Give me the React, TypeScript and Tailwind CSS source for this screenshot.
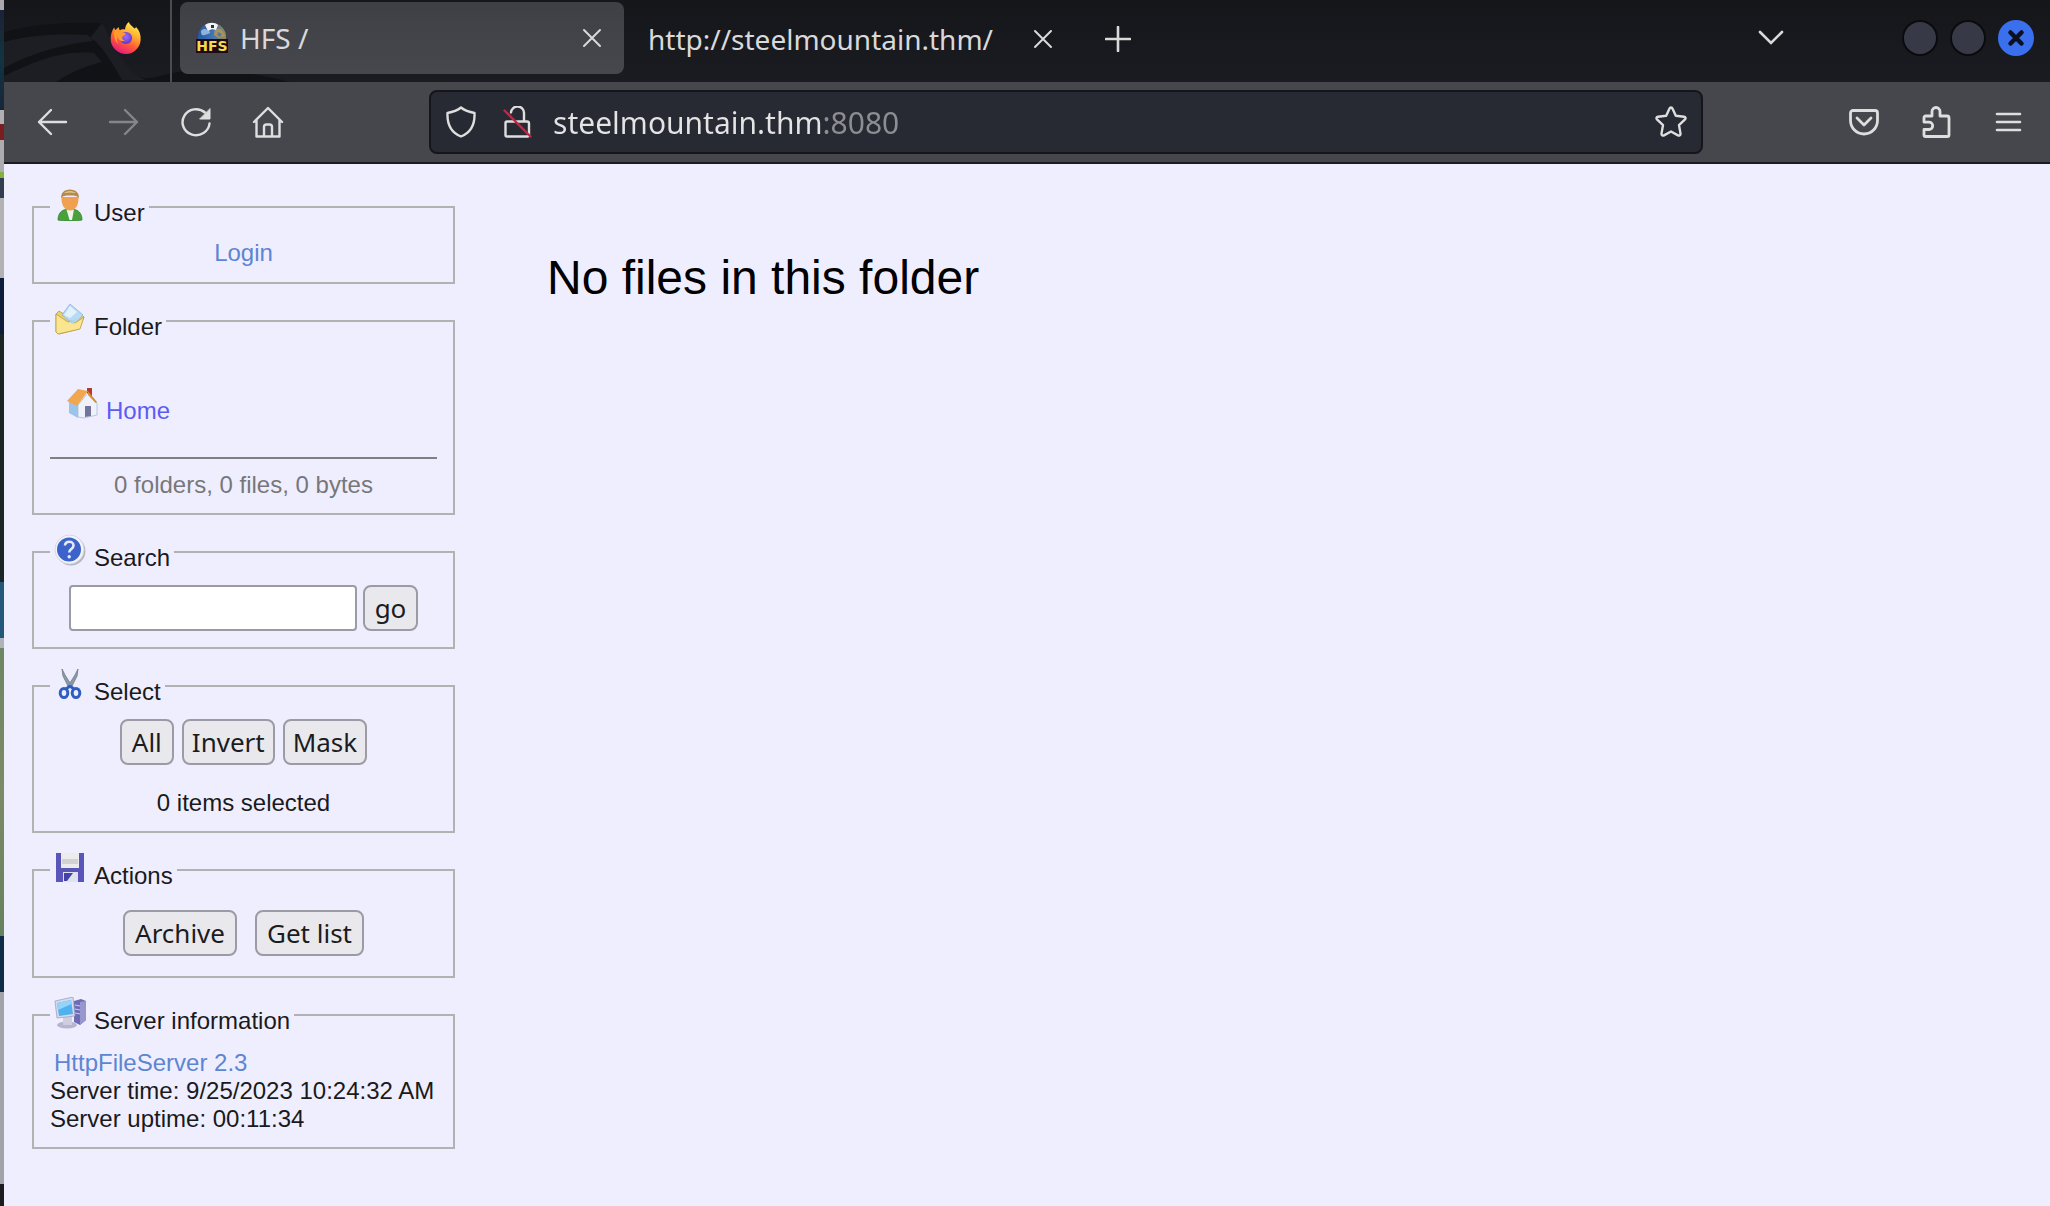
import React from "react";

type IconProps = { className?: string };

const sans = "font-['Noto_Sans',sans-serif]";

function FirefoxLogo() {
  return (
    <svg viewBox="0 0 34 34" className="size-8" aria-hidden="true">
      <defs>
        <linearGradient id="ffBody" x1="0.8" y1="0" x2="0.3" y2="1">
          <stop offset="0" stopColor="#fff35a" />
          <stop offset="0.35" stopColor="#ffb02e" />
          <stop offset="0.65" stopColor="#ff5a36" />
          <stop offset="1" stopColor="#e31587" />
        </linearGradient>
        <radialGradient id="ffGlobe" cx="0.5" cy="0.4" r="0.6">
          <stop offset="0" stopColor="#a06bff" />
          <stop offset="1" stopColor="#5a35c8" />
        </radialGradient>
      </defs>
      <path d="M20 0c1 3 4 4.500 6 7 1-.3 1.500-1 1.500-2 4 4 5.500 9 5 14.500C31.800 28 25 34 17 34S1.500 28 .8 19.500C.3 13.500 2 9.500 4.500 5.500c.3 1.500.6 2.200 1.200 3C7 7 8 6.200 9.500 5.500c0 1.500.3 2.500 1 3.300C12 7.500 14 7.500 16 8c0-3 1.500-6 4-8z" fill="url(#ffBody)" />
      <circle cx="17" cy="17" r="6.500" fill="url(#ffGlobe)" />
      <path d="M5 9c4-1 7 0 8.500 2.500 1.500.2 3 .3 3.200 1.200 0 1-3.200 1.800-3.700 3.300-.3 2 .8 3.500 3 4-3.500 1.500-7-.5-7.500-4C7 18 7 21 9 23.500 5 21 3.500 14 5 9z" fill="#ff9a2e" />
    </svg>
  );
}

function HfsFavicon() {
  return (
    <svg viewBox="0 0 32 32" className="size-8" aria-hidden="true">
      <defs>
        <linearGradient id="hfsGlobe" x1="0" y1="0.5" x2="1" y2="0.5">
          <stop offset="0" stopColor="#2458a8" />
          <stop offset="0.5" stopColor="#3f74b5" />
          <stop offset="1" stopColor="#9b8b56" />
        </linearGradient>
      </defs>
      <circle cx="16" cy="15" r="14" fill="url(#hfsGlobe)" />
      <path d="M5 9c3-3 5-2 8 0s-1 3-4 4-4 0-4-4z" fill="#8fb2da" />
      <path d="M19 8c4-3 8 0 10 6l-6 2-5-3z" fill="#a8945f" />
      <path d="M22 10l4 2-2 3-3-2z" fill="#5c7a9c" />
      <path d="M9 3c4-3 10-3 13 0l-2 5-4-1-4 2z" fill="#f1f3f6" />
      <path d="M15 3h3v3h-3z" fill="#24324a" />
      <rect x="0" y="17" width="32" height="14" fill="#1d0a12" />
      <text x="16" y="29" textAnchor="middle" fontFamily="DejaVu Sans, sans-serif" fontWeight="700" fontSize="14" fill="#f0dc4c">HFS</text>
    </svg>
  );
}

function CloseIcon({ className = "size-5" }: IconProps) {
  return (
    <svg viewBox="0 0 20 20" className={className} fill="none" stroke="currentColor" strokeWidth="2" strokeLinecap="round" aria-hidden="true">
      <path d="M2 2l16 16M18 2L2 18" />
    </svg>
  );
}

const line = {
  viewBox: "0 0 32 32",
  className: "size-8",
  fill: "none",
  stroke: "currentColor",
  strokeWidth: 2.4,
  strokeLinecap: "round" as const,
  strokeLinejoin: "round" as const,
  "aria-hidden": true,
};

const BackIcon = () => (
  <svg {...line}><path d="M30 16H3M15 4L3 16l12 12" /></svg>
);
const ForwardIcon = () => (
  <svg {...line}><path d="M2 16h27M17 4l12 12-12 12" /></svg>
);
const ReloadIcon = () => (
  <svg {...line}>
    <path d="M29.500 17.500A13.500 13 0 1 1 25 6.500" />
    <path d="M30 3v10H20z" fill="currentColor" strokeWidth="1" />
  </svg>
);
const HomeIcon = () => (
  <svg {...line}>
    <path d="M2 16L16 2l14 14M4.500 14V30.500h23V14M12 30V21a2.500 2.500 0 0 1 2.500-2.500h3A2.500 2.500 0 0 1 20 21v9" />
  </svg>
);
const ShieldIcon = () => (
  <svg {...line}>
    <path d="M16 1.500c4 3.200 8.500 4.600 13.500 5.500C30 19 25 27 16 30.500 7 27 2 19 2.500 7 7.500 6.100 12 4.700 16 1.500z" />
  </svg>
);
const LockIcon = () => (
  <svg {...line}>
    <path d="M10 6.500A6.500 6.500 0 0 1 23 7.500V15M6 15.500h20a2 2 0 0 1 2 2V29a1.500 1.500 0 0 1-1.500 1.500H6A1.500 1.500 0 0 1 4.500 29V17A1.500 1.500 0 0 1 6 15.500z" />
    <path d="M3.500 4.500L29.500 30.500" stroke="#cf2142" />
  </svg>
);
const StarIcon = () => (
  <svg {...line}>
    <path d="M16 1.500c.8 0 1.300.5 1.600 1.200l3.200 7 8.200 1c1.500.2 2 1.700 1 2.700l-6 5.700 1.500 8.500c.2 1.500-1.200 2.500-2.500 1.800L16 25.500l-7 3.900c-1.300.7-2.700-.3-2.500-1.800L8 19.100l-6-5.700c-1-1-.5-2.500 1-2.700l8.200-1 3.200-7c.3-.7.8-1.200 1.600-1.200z" />
  </svg>
);
const PocketIcon = () => (
  <svg {...line} strokeWidth={2.800}>
    <path d="M5 4.500h22a2.500 2.500 0 0 1 2.500 2.500v7.500a13.500 13.500 0 0 1-27 0V7A2.500 2.500 0 0 1 5 4.500zM9 12l7 7 7-7" />
  </svg>
);
const PuzzleIcon = () => (
  <svg {...line} strokeWidth={2.800}>
    <path d="M12 10V5.500a4 4 0 0 1 8 0V10H27a2 2 0 0 1 2 2v17a1.500 1.500 0 0 1-1.500 1.500h-22A1.500 1.500 0 0 1 4 29v-5.500h5a3.700 3.700 0 0 0 0-7.400H4V11.500A1.500 1.500 0 0 1 5.500 10z" />
  </svg>
);
const MenuIcon = () => (
  <svg {...line} strokeWidth={2.600}><path d="M5 8h23M5 16h23M5 24h23" /></svg>
);

const UserIcon = () => (
  <svg viewBox="0 0 32 32" className="size-8" aria-hidden="true">
    <path d="M4 31c0-7 4-10 8-10.500h8c4 .5 8 3.500 8 10.500-6 1.500-18 1.500-24 0z" fill="#4aa13c" stroke="#2f8030" strokeWidth="0.800" />
    <path d="M12.500 20.500h7.500L18 31h-2.500z" fill="#eef5ee" />
    <path d="M7.500 8C7 15 10 21.500 16 21.500S25 15 24.500 8z" fill="#f0a050" />
    <path d="M7 9c0-5 3-8.500 9-8.500S25 4 25 9c-2-2-4-2.500-9-2.500S9 7 7 9z" fill="#b58a4a" />
    <path d="M10 4c3-2.500 9-2.500 12 0-4-.8-8-.8-12 0z" fill="#e8cf9c" />
  </svg>
);
const FolderIcon = () => (
  <svg viewBox="0 0 32 32" className="size-8" aria-hidden="true">
    <path d="M2 11l3-3 5 3 14-2 6 5-5 12-20 5-3-2z" fill="#eed06a" stroke="#b89a45" strokeWidth="0.800" />
    <path d="M16 1l13 11-9 10L8 12z" fill="#b9daf5" stroke="#87b3dd" strokeWidth="0.800" />
    <path d="M16 3l7 6-7 6-6-3z" fill="#e3f1fc" />
    <path d="M2 11l12 8 3-1 4 2 9-6-4 12L4 31 2 29z" fill="#fbe58e" stroke="#b89a45" strokeWidth="0.800" />
    <path d="M15 19l8-4-4 6z" fill="#a9d3f3" />
  </svg>
);
const HouseIcon = () => (
  <svg viewBox="0 0 32 32" className="size-8" aria-hidden="true">
    <path d="M21 1h5v9h-5z" fill="#b3392e" />
    <path d="M3 13l9 3v15L3 26z" fill="#9cc4ea" />
    <path d="M12 18l10-12 9 10v12l-13 3-6-1z" fill="#eef3fa" stroke="#a9bdd6" strokeWidth="0.800" />
    <path d="M1 14L12 2l10 2-11 15z" fill="#f1a750" />
    <path d="M22 4l9 11-1.500 1L22 8z" fill="#d98a3c" />
    <path d="M19 19h6v10l-6 1z" fill="#72749c" />
  </svg>
);
const QuestionIcon = () => (
  <svg viewBox="0 0 32 32" className="size-8" aria-hidden="true">
    <circle cx="17" cy="17" r="14.500" fill="#b5b6c4" />
    <circle cx="15.500" cy="15.500" r="14.500" fill="#f3f3fa" stroke="#cfd0dc" strokeWidth="0.800" />
    <circle cx="15" cy="15.500" r="12" fill="#3c63c9" />
    <path d="M11 11.500c.3-5 8.500-5 8.500 0 0 3.500-4.300 3.500-4.300 7" fill="none" stroke="#e4ebfb" strokeWidth="2.600" />
    <circle cx="15.200" cy="22.700" r="1.700" fill="#e4ebfb" />
  </svg>
);
const ScissorsIcon = () => (
  <svg viewBox="0 0 32 32" className="size-8" fill="none" aria-hidden="true">
    <path d="M8 1l1 7 5 10 4 0L11 7zM24 1l-1 7-5 10-4 0L21 7z" fill="#8c98a6" stroke="#7b8896" strokeWidth="1" />
    <ellipse cx="10" cy="25" rx="3.800" ry="4.500" stroke="#2e5fc0" strokeWidth="3" />
    <ellipse cx="22" cy="25" rx="3.800" ry="4.500" stroke="#2e5fc0" strokeWidth="3" />
    <path d="M12 21l4-3 4 3" stroke="#2e5fc0" strokeWidth="3" />
  </svg>
);
const DiskIcon = () => (
  <svg viewBox="0 0 32 32" className="size-8" aria-hidden="true">
    <path d="M2 1h28v29H2z" fill="#5a55b8" />
    <path d="M7 1h18v15H7z" fill="#ececec" />
    <path d="M8 7h16v5H8z" fill="#d2d2d2" />
    <path d="M9 20h15v10H9z" fill="#dfe3ee" />
    <path d="M10 21h9l-6 8h-3z" fill="#4542a5" />
  </svg>
);
const ServerIcon = () => (
  <svg viewBox="0 0 32 32" className="size-8" aria-hidden="true">
    <path d="M20 4l7-2 5 2v19l-6 5-6-3z" fill="#6d6bb5" />
    <path d="M26 5l6-1v19l-6 5z" fill="#9796cf" />
    <path d="M21 8l5 1M21 12l5 1M21 16l5 1" stroke="#c9c9ea" strokeWidth="1.200" />
    <ellipse cx="13" cy="28" rx="10" ry="3.500" fill="#b7b4cf" />
    <path d="M9 19h9v9H9z" fill="#cfcde0" />
    <path d="M1 4l18-4 2 19-18 2z" fill="#d8d9ea" stroke="#9fa1c0" strokeWidth="0.800" />
    <path d="M3 6l14-3 2 14-14 2z" fill="#4fb2f0" />
    <path d="M3 6l14-3 .5 4L4 13z" fill="#93d4fa" />
  </svg>
);

function Panel({ title, icon, className, children }: { title: string; icon: React.ReactNode; className: string; children: React.ReactNode }) {
  return (
    <fieldset className={`min-w-0 border-2 border-[#b2b2b2] px-4 ${className}`}>
      <legend className="flex h-10 items-end gap-2 px-1 text-left">
        <span className="mt-0.5 self-start">{icon}</span>
        <span>{title}</span>
      </legend>
      {children}
    </fieldset>
  );
}

function FormButton({ children, className = "px-2.5" }: { children: string; className?: string }) {
  return (
    <button type="button" className={`h-[46px] rounded-lg border-2 border-[#9b9aa5] bg-[#e9e9ed] text-[26px] leading-[42px] text-[#1c1c1e] ${sans} ${className}`}>
      {children}
    </button>
  );
}

function TitleBar() {
  return (
    <header className={`relative flex h-[82px] items-stretch overflow-hidden bg-linear-to-b from-[#15161a] to-[#1b1c21] text-[28px] text-[#d9d9da] ${sans}`}>
      <svg className="absolute left-0 top-0 h-[82px] w-[300px]" viewBox="0 0 300 82" aria-hidden="true">
        <path d="M0 32C30 24 60 22 98 23c6 16 14 32 28 48 8 9 18 8 30 5 20-6 60-12 130 6H0z" fill="#111216" />
        <path d="M0 42c30-8 60-8 84-7l5 6C60 44 30 52 0 68z" fill="#1d1e23" />
        <path d="M0 76c30-14 56-26 90-23l8 9C80 66 64 74 52 82H0z" fill="#1d1e23" />
        <path d="M98 23c14 26 26 52 44 57h-24C108 62 96 42 86 38z" fill="#1d1e23" />
      </svg>
      <div className="relative flex w-[168px] items-center justify-end border-r-2 border-[#4b4c50] pb-1.5 pr-7">
        <FirefoxLogo />
      </div>
      <div className="relative mt-0.5 ml-2 mb-2 flex w-[444px] items-center gap-3 rounded-lg bg-linear-to-b from-[#3f4045] to-[#47484d] pl-4 pr-[18px]">
        <HfsFavicon />
        <span className="flex-1">HFS /</span>
        <button type="button" aria-label="Close tab HFS" className="p-1"><CloseIcon /></button>
      </div>
      <div className="relative flex items-center gap-10 pb-1 pl-6">
        <span>http://steelmountain.thm/</span>
        <button type="button" aria-label="Close tab steelmountain"><CloseIcon /></button>
        <button type="button" aria-label="New tab" className="ml-3">
          <svg viewBox="0 0 26 26" className="size-[26px]" stroke="currentColor" strokeWidth="2.600" strokeLinecap="round" aria-hidden="true"><path d="M13 1v24M1 13h24" /></svg>
        </button>
      </div>
      <div className="ml-auto flex items-center gap-3 pb-1.5 pr-4">
        <button type="button" aria-label="List all tabs" className="mr-[106px]">
          <svg viewBox="0 0 26 16" className="h-4 w-[26px]" fill="none" stroke="currentColor" strokeWidth="2.600" strokeLinecap="round" aria-hidden="true"><path d="M2 2l11 11L24 2" /></svg>
        </button>
        <button type="button" aria-label="Minimize" className="size-9 rounded-full border-2 border-[#0b0b0e] bg-[#373a46]" />
        <button type="button" aria-label="Maximize" className="size-9 rounded-full border-2 border-[#0b0b0e] bg-[#373a46]" />
        <button type="button" aria-label="Close window" className="flex size-9 items-center justify-center rounded-full bg-[#3a6fee] text-[#0c1020]">
          <svg viewBox="0 0 18 18" className="size-[18px]" stroke="currentColor" strokeWidth="4.500" strokeLinecap="round" aria-hidden="true"><path d="M3.500 3.500l11 11M14.500 3.500l-11 11" /></svg>
        </button>
      </div>
    </header>
  );
}

function Toolbar() {
  return (
    <nav className={`flex h-[82px] items-center border-b-2 border-[#1c1c20] bg-[#46474c] text-[30px] text-[#dededf] ${sans}`}>
      <div className="flex items-center gap-10 pl-8 pr-3">
        <button type="button" aria-label="Back"><BackIcon /></button>
        <button type="button" aria-label="Forward" className="text-[#85868a]"><ForwardIcon /></button>
        <button type="button" aria-label="Reload"><ReloadIcon /></button>
        <button type="button" aria-label="Home"><HomeIcon /></button>
      </div>
      <div className="flex-[3]" />
      <div className="flex h-16 flex-[28] items-center rounded-lg border-2 border-[#15161b] bg-[#282a33] px-3.5">
        <button type="button" aria-label="Tracking protection" className="mr-6"><ShieldIcon /></button>
        <button type="button" aria-label="Connection not secure" className="mr-5"><LockIcon /></button>
        <input
          type="text"
          aria-label="Address"
          defaultValue="steelmountain.thm:8080"
          className="h-full min-w-0 flex-1 bg-linear-to-r from-[#e4e4e5] from-[270px] to-[#8d8e93] to-[270px] bg-clip-text text-transparent outline-none"
        />
        <button type="button" aria-label="Bookmark this page"><StarIcon /></button>
      </div>
      <div className="flex-[3]" />
      <div className="flex items-center gap-10 pl-3 pr-[26px]">
        <button type="button" aria-label="Save to Pocket"><PocketIcon /></button>
        <button type="button" aria-label="Extensions"><PuzzleIcon /></button>
        <button type="button" aria-label="Menu"><MenuIcon /></button>
      </div>
    </nav>
  );
}

function Sidebar() {
  return (
    <aside className="flex w-[423px] shrink-0 flex-col gap-[17px]">
      <Panel title="User" icon={<UserIcon />} className="pt-3 pb-[15px]">
        <a href="#login" className="block text-center text-[#5d85d2]">Login</a>
      </Panel>
      <Panel title="Folder" icon={<FolderIcon />} className="pt-11 pb-3.5">
        <a href="#home" className="flex h-10 items-end gap-2 pl-4 text-[#5c5cf5]">
          <span className="mt-0.5 self-start"><HouseIcon /></span>
          <span>Home</span>
        </a>
        <hr className="mt-8 mb-3 border-t-2 border-[#808084]" />
        <p className="text-center text-[#77777a]">0 folders, 0 files, 0 bytes</p>
      </Panel>
      <Panel title="Search" icon={<QuestionIcon />} className="pt-[13px] pb-4">
        <form className="flex justify-center gap-1.5" onSubmit={(e) => e.preventDefault()}>
          <input type="text" aria-label="Search" className="h-[46px] w-[288px] rounded-sm border-2 border-[#9b9aa5] bg-white px-2 outline-none" />
          <FormButton>go</FormButton>
        </form>
      </Panel>
      <Panel title="Select" icon={<ScissorsIcon />} className="pt-[13px] pb-3.5">
        <div className="mb-6 flex justify-center gap-2">
          <FormButton>All</FormButton>
          <FormButton className="px-2">Invert</FormButton>
          <FormButton className="px-2">Mask</FormButton>
        </div>
        <p className="text-center">0 items selected</p>
      </Panel>
      <Panel title="Actions" icon={<DiskIcon />} className="py-5">
        <div className="flex justify-center gap-[18px]">
          <FormButton>Archive</FormButton>
          <FormButton>Get list</FormButton>
        </div>
      </Panel>
      <Panel title="Server information" icon={<ServerIcon />} className="py-3.5 whitespace-nowrap">
        <a href="#hfs" className="block pl-1 text-[#5d85d2]">HttpFileServer 2.3</a>
        <p>Server time: 9/25/2023 10:24:32 AM</p>
        <p>Server uptime: 00:11:34</p>
      </Panel>
    </aside>
  );
}

function DesktopEdge() {
  return (
    <div className="flex w-1 shrink-0 flex-col bg-[#1c1c20]" aria-hidden="true">
      <div className="h-2.5 bg-[#a9a9ad]" />
      <div className="h-[100px] bg-linear-to-b from-[#1b2236] via-[#123440] to-[#16263a]" />
      <div className="h-3.5 bg-[#b0b0b4]" />
      <div className="h-4 bg-[#7b1d1d]" />
      <div className="h-8 bg-[#acacb0]" />
      <div className="h-1.5 bg-[#84b03c]" />
      <div className="h-5 bg-[#343c50]" />
      <div className="h-20 bg-[#b2b2b4]" />
      <div className="h-14 bg-[#0d1c3b]" />
      <div className="h-[248px] bg-[#1d2426]" />
      <div className="h-14 bg-[#24587a]" />
      <div className="h-2.5 bg-[#b0b3b8]" />
      <div className="h-72 bg-linear-to-b from-[#6d8664] via-[#7c8a66] to-[#66815e]" />
      <div className="h-14 bg-[#0f2c47]" />
      <div className="h-48 bg-[#a2a3a8]" />
    </div>
  );
}

export default function App() {
  return (
    <div className="flex min-h-screen">
      <DesktopEdge />
      <div className="flex min-w-0 flex-1 flex-col bg-[#efeefe]">
        <TitleBar />
        <Toolbar />
        <main className="flex flex-1 gap-[92px] pl-7 pt-[23px] font-['Liberation_Sans',Arial,sans-serif] text-[24px] leading-7 text-[#1a1a1c]">
          <Sidebar />
          <h1 className="mt-16 text-[48px] leading-[54px] text-black">No files in this folder</h1>
        </main>
      </div>
    </div>
  );
}
